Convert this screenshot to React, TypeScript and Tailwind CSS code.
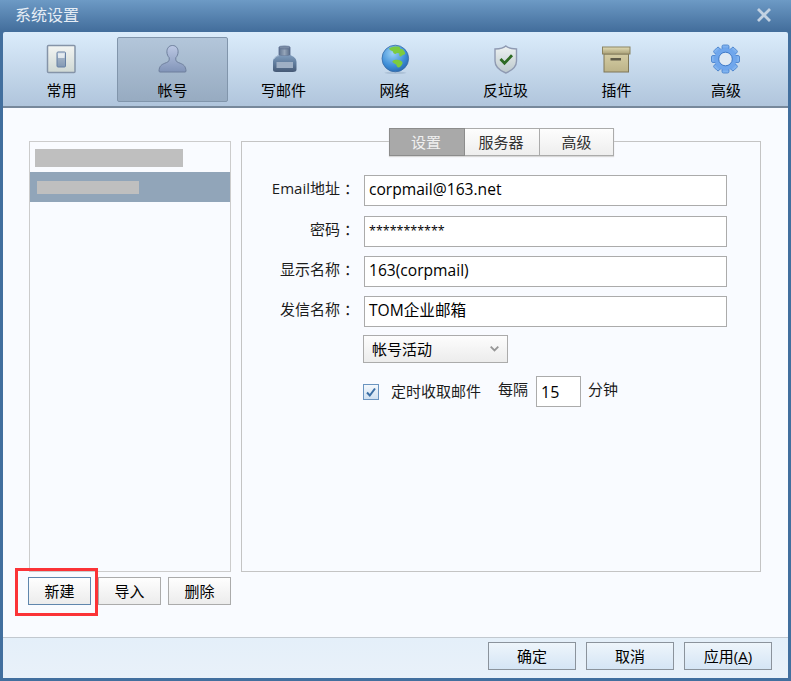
import React from "react";

const font = { fontFamily: '"Open Sans","Noto Sans CJK SC",sans-serif' };

function IconSwitch() {
  return (
    <svg width="32" height="32" viewBox="0 0 32 32">
      <defs>
        <linearGradient id="sw" x1="0" y1="0" x2="0" y2="1">
          <stop offset="0" stopColor="#f3f5f3" />
          <stop offset="1" stopColor="#cfd8d4" />
        </linearGradient>
        <linearGradient id="sw2" x1="0" y1="0" x2="0" y2="1">
          <stop offset="0" stopColor="#dfe6ee" />
          <stop offset="0.4" stopColor="#9fb0c4" />
          <stop offset="1" stopColor="#8399b4" />
        </linearGradient>
      </defs>
      <rect x="1.500" y="1.500" width="27.500" height="27" rx="1" fill="url(#sw)" stroke="#8594a8" strokeWidth="1.500" />
      <rect x="11" y="8" width="8.500" height="15" rx="1" fill="url(#sw2)" stroke="#6680a4" />
      <rect x="12" y="9.500" width="6.500" height="4.500" fill="#eef2f5" opacity="0.8" />
    </svg>
  );
}

function IconUser() {
  return (
    <svg width="32" height="32" viewBox="0 0 32 32">
      <defs>
        <linearGradient id="us" x1="0" y1="0" x2="0" y2="1">
          <stop offset="0" stopColor="#bcc8e4" />
          <stop offset="1" stopColor="#8194b8" />
        </linearGradient>
      </defs>
      <path
        d="M15.500 1.500c-3.600 0-5.600 2.800-5.600 6.200 0 2.600 1 4.600 2.300 6v2.200c0 1.400-1.600 2.300-4.500 3.400C4.700 20.500 2.200 22 2 27c0 .6.300 1 1 1h25c.7 0 1-.4 1-1-.2-5-2.700-6.500-5.700-7.700-2.900-1.100-4.500-2-4.500-3.400v-2.200c1.300-1.400 2.300-3.400 2.300-6 0-3.400-2-6.200-5.600-6.200z"
        fill="url(#us)"
        stroke="#6e7f9c"
        strokeWidth="1"
      />
    </svg>
  );
}

function IconInk() {
  return (
    <svg width="32" height="32" viewBox="0 0 32 32">
      <defs>
        <linearGradient id="ink" x1="0" y1="0" x2="0" y2="1">
          <stop offset="0" stopColor="#7f9cbc" />
          <stop offset="0.5" stopColor="#5f7b9c" />
          <stop offset="1" stopColor="#465a76" />
        </linearGradient>
        <linearGradient id="cap" x1="0" y1="0" x2="1" y2="0">
          <stop offset="0" stopColor="#5f7390" />
          <stop offset="0.5" stopColor="#95a5b9" />
          <stop offset="1" stopColor="#586b87" />
        </linearGradient>
      </defs>
      <path d="M11 3h11v9H11z" fill="url(#cap)" stroke="#56688a" strokeWidth="0.800" />
      <ellipse cx="16.500" cy="3.500" rx="5.500" ry="1.600" fill="#7a8ba4" stroke="#56688a" strokeWidth="0.600" />
      <path
        d="M11 11c-3.500 1.300-6 3.500-6 7v7.500c0 1.800 1.200 2.500 3 2.500h17c1.800 0 3.500-.7 3.500-2.500V18c0-3.500-3-5.700-6.500-7-3 1.200-8 1.200-11 0z"
        fill="url(#ink)"
      />
      <rect x="8.500" y="18" width="16.500" height="6" fill="#9fb0c5" />
      <path d="M6 15c1.500-2 3-3 5-3.500" stroke="#a8bcd3" strokeWidth="1" fill="none" />
    </svg>
  );
}

function IconGlobe() {
  return (
    <svg width="32" height="32" viewBox="0 0 32 32">
      <defs>
        <radialGradient id="gl" cx="0.4" cy="0.3" r="0.8">
          <stop offset="0" stopColor="#9bd1f5" />
          <stop offset="0.6" stopColor="#3f8fd8" />
          <stop offset="1" stopColor="#2260a8" />
        </radialGradient>
      </defs>
      <ellipse cx="16.300" cy="28.800" rx="11" ry="1.200" fill="#8aa0b8" opacity="0.4" />
      <circle cx="16.300" cy="14.500" r="13.300" fill="url(#gl)" stroke="#3a6ca6" strokeWidth="0.800" />
      <path d="M10 4.500c3-2 8-2.500 11-1.500-.5 1.500.5 2.500 2.500 2 1.500 1.500 2.500 3 2.800 5-1.500 1-3 1-4.300 2.500-1.500.5-2-1.500-1.500-3-1.500-1-3-.5-4 .5-1.500 0-2.500-1-2.500-2.500C12 6.500 10.500 6 10 4.500z" fill="#7ccb3e" />
      <path d="M13.500 17c1.500-1.500 4-1.500 6-1 2.500.5 4.500 1.500 4 3.500-.8 2-2.500 4-4 4-1.500 0-1.500-1.800-2.500-3s-4-1.500-3.500-3.500z" fill="#7ccb3e" />
    </svg>
  );
}

function IconShield() {
  return (
    <svg width="32" height="32" viewBox="0 0 32 32">
      <defs>
        <linearGradient id="sh" x1="0" y1="0" x2="0" y2="1">
          <stop offset="0" stopColor="#eef2f2" />
          <stop offset="1" stopColor="#bcc8cc" />
        </linearGradient>
      </defs>
      <path
        d="M15.800 2c1.800 1.800 5.500 2.800 10.700 3v12c0 5.500-4.500 9.500-10.700 12C9.500 26.500 5 22.500 5 17V5c5.200-.2 9-1.200 10.800-3z"
        fill="url(#sh)"
        stroke="#8f9ab2"
        strokeWidth="1.400"
      />
      <path d="M10.500 15l4 4.300 7.500-8" fill="none" stroke="#2e6a22" strokeWidth="2.800" />
    </svg>
  );
}

function IconBox() {
  return (
    <svg width="32" height="32" viewBox="0 0 32 32">
      <defs>
        <linearGradient id="bx" x1="0" y1="0" x2="0" y2="1">
          <stop offset="0" stopColor="#d4cca4" />
          <stop offset="1" stopColor="#bcb388" />
        </linearGradient>
        <linearGradient id="bl" x1="0" y1="0" x2="0" y2="1">
          <stop offset="0" stopColor="#e2dcb6" />
          <stop offset="1" stopColor="#a9a077" />
        </linearGradient>
      </defs>
      <rect x="3" y="10" width="24.500" height="18" fill="url(#bx)" stroke="#7e7758" />
      <rect x="1.500" y="3" width="27.500" height="7" fill="url(#bl)" stroke="#8a8362" />
      <rect x="9.500" y="14" width="10.500" height="2.500" fill="#5e5a48" />
    </svg>
  );
}

function IconGear() {
  const teeth = [0, 45, 90, 135, 180, 225, 270, 315];
  return (
    <svg width="32" height="32" viewBox="0 0 32 32">
      <defs>
        <linearGradient id="gr" x1="0" y1="0" x2="0" y2="1">
          <stop offset="0" stopColor="#8cbcf2" />
          <stop offset="1" stopColor="#4d8ce4" />
        </linearGradient>
      </defs>
      <g transform="translate(-0.500 -1)">
        <g fill="url(#gr)" stroke="#3f7ac8" strokeWidth="0.800">
          {teeth.map((a) => (
            <rect key={a} x="12.500" y="2" width="7" height="7" rx="1.500" transform={`rotate(${a} 16 16)`} />
          ))}
        </g>
        <circle cx="16" cy="16" r="10.800" fill="#6fa6ec" />
        <circle cx="16" cy="16" r="6.800" fill="#dfe9f3" stroke="#3f7ac8" strokeWidth="1" />
      </g>
    </svg>
  );
}

const tabs: [string, React.ReactNode, boolean, string][] = [
  ["常用", <IconSwitch />, false, "w-[111px]"],
  ["帐号", <IconUser />, true, "w-[111px]"],
  ["写邮件", <IconInk />, false, "w-[111px]"],
  ["网络", <IconGlobe />, false, "w-[111px]"],
  ["反垃圾", <IconShield />, false, "w-[111px]"],
  ["插件", <IconBox />, false, "w-[111px]"],
  ["高级", <IconGear />, false, "w-[108px]"],
];

function Field({ label, value, className, valueClass }: { label: string; value: string; className: string; valueClass?: string }) {
  return (
    <div className={`flex items-center ${className}`}>
      <div className="w-[113px] -translate-y-[2px] text-right text-[15px] text-[#1c1c1c]">
        {label}
        <span className="relative left-[4px]">：</span>
      </div>
      <div
        className={`ml-[9px] flex h-[31px] w-[363px] items-center border border-[#ababab] bg-white pl-[4px] text-black ${
          valueClass ?? "pb-[2px] text-[15.600px]"
        }`}
      >
        {value}
      </div>
    </div>
  );
}

function SmallButton({ label, active }: { label: string; active?: boolean }) {
  return (
    <div
      className={`flex h-[28px] w-[63px] items-center justify-center border bg-gradient-to-b from-[#fefefe] to-[#ececec] text-[15px] text-black ${
        active ? "border-[#5f86ad]" : "border-[#ababab]"
      }`}
    >
      {label}
    </div>
  );
}

function FooterButton({ children }: { children: React.ReactNode }) {
  return (
    <div className="flex h-[28px] w-[88px] items-center justify-center border border-[#8b939c] bg-gradient-to-b from-[#eef5fb] to-[#d5e5f5] text-[15px] text-black">
      {children}
    </div>
  );
}

export default function App() {
  return (
    <div className="relative flex h-[681px] w-[791px] flex-col overflow-hidden bg-[#426f9e]" style={font}>
      <div className="flex h-[32px] shrink-0 items-center justify-between bg-gradient-to-b from-[#6d9ac5] to-[#426d9b] pb-[2px] pl-[15px] pr-[19px]">
        <span className="text-[16px] text-[#e6edf5]">系统设置</span>
        <svg width="16" height="16" viewBox="0 0 16 16">
          <path d="M2 2l12 12M14 2L2 14" stroke="#c3d2e2" strokeWidth="2.800" />
        </svg>
      </div>

      <div className="mx-[3px] flex min-h-0 flex-1 flex-col overflow-hidden rounded-t-[2px]">
        <div className="flex h-[76px] shrink-0 items-start border-b-2 border-[#77889b] bg-gradient-to-b from-[#dbecfb] to-[#b0c5dc] pl-[3px] pt-[5px]">
          {tabs.map(([label, icon, active, width]) => (
            <div
              key={label}
              className={`flex h-[65px] flex-col items-center rounded-[2px] border pt-[6px] ${width} ${
                active
                  ? "border-[#8195ab] bg-gradient-to-b from-[#b3c6da] to-[#97abc1]"
                  : "border-transparent"
              }`}
            >
              <div className="h-[32px] w-[32px]">{icon}</div>
              <div className="mt-[4px] text-[15px] leading-[20px] text-black">{label}</div>
            </div>
          ))}
        </div>

        <div className="flex min-h-0 flex-1 bg-[#f9fbff] pl-[26px] pt-[33px]">
          <div className="w-[202px] shrink-0">
            <div className="h-[431px] border border-[#cccccc] bg-[#f9fbff]">
              <div className="flex h-[30px] items-start pl-[5px] pt-[7px]">
                <div className="h-[18px] w-[148px] bg-[#bfbfbf]" />
              </div>
              <div className="flex h-[30px] items-center bg-[#91a5b9] pl-[7px]">
                <div className="h-[13px] w-[102px] bg-[#bfbfbf]" />
              </div>
            </div>
            <div className="-ml-px mt-[5px] flex gap-[7px]">
              <SmallButton label="新建" active />
              <SmallButton label="导入" />
              <SmallButton label="删除" />
            </div>
          </div>

          <div className="ml-[10px] h-[431px] w-[520px] shrink-0 border border-[#c4c4c4] bg-[#f9fbff]">
            <div className="-mt-[14px] ml-[147px] flex h-[28px] w-[225px] shadow-[0_1px_1px_#d8d8d8]">
              <div className="flex w-[76px] items-center justify-center border border-[#8c8c8c] bg-[#a9a9a9] pr-[2px] text-[15px] text-[#f0f0f0]">
                设置
              </div>
              <div className="flex w-[75px] items-center justify-center border-y border-r border-[#ababab] bg-gradient-to-b from-[#fdfdfd] to-[#eeeeee] pr-[2px] text-[15px] text-[#333333]">
                服务器
              </div>
              <div className="flex w-[74px] items-center justify-center border-y border-r border-[#ababab] bg-gradient-to-b from-[#fdfdfd] to-[#eeeeee] text-[15px] text-[#333333]">
                高级
              </div>
            </div>

            <Field label="Email地址" value="corpmail@163.net" className="mt-[19px]" />
            <Field label="密码" value="***********" className="mt-[10px]" valueClass="text-[12.500px]" />
            <Field label="显示名称" value="163(corpmail)" className="mt-[9px]" />
            <Field label="发信名称" value="TOM企业邮箱" className="mt-[9px]" />

            <div className="ml-[121px] mt-[8px] flex h-[28px] w-[145px] items-center justify-between border border-[#ababab] bg-gradient-to-b from-[#fdfdfd] to-[#ececec] pl-[8px] pr-[8px] text-[15px] text-black">
              <span>帐号活动</span>
              <svg width="9" height="6" viewBox="0 0 9 6">
                <path d="M0.700 0.700l3.800 3.800 3.800-3.800" fill="none" stroke="#969696" strokeWidth="1.800" />
              </svg>
            </div>

            <div className="ml-[121px] mt-[13px] flex items-center text-[15px] text-[#1c1c1c]">
              <div className="flex h-[16px] w-[16px] items-center justify-center border border-[#6a94c0] bg-gradient-to-b from-[#f4f8fc] to-[#cfe0f1]">
                <svg width="12" height="12" viewBox="0 0 12 12">
                  <path d="M2 6.500l2.800 3L10 2.500" fill="none" stroke="#3a6ea5" strokeWidth="2" />
                </svg>
              </div>
              <span className="ml-[12px]">定时收取邮件</span>
              <span className="ml-[17px] -translate-y-[2px]">每隔</span>
              <div className="ml-[8px] flex h-[31px] w-[45px] items-center border border-[#ababab] bg-white pl-[4px] text-[16px] text-black">
                15
              </div>
              <span className="ml-[7px] -translate-y-[2px]">分钟</span>
            </div>
          </div>
        </div>

        <div className="flex h-[41px] shrink-0 items-start justify-end gap-[10px] border-t border-[#c2c8cf] bg-gradient-to-b from-[#e4eff9] to-[#e9f1f9] pr-[16px] pt-[4px]">
          <FooterButton>确定</FooterButton>
          <FooterButton>取消</FooterButton>
          <FooterButton>
            应用(<span className="underline">A</span>)
          </FooterButton>
        </div>
      </div>
      <div className="h-[3px] shrink-0" />

      <div className="absolute left-[15px] top-[568px] h-[48px] w-[83px] border-[3px] border-[#fb3337]" />
    </div>
  );
}
